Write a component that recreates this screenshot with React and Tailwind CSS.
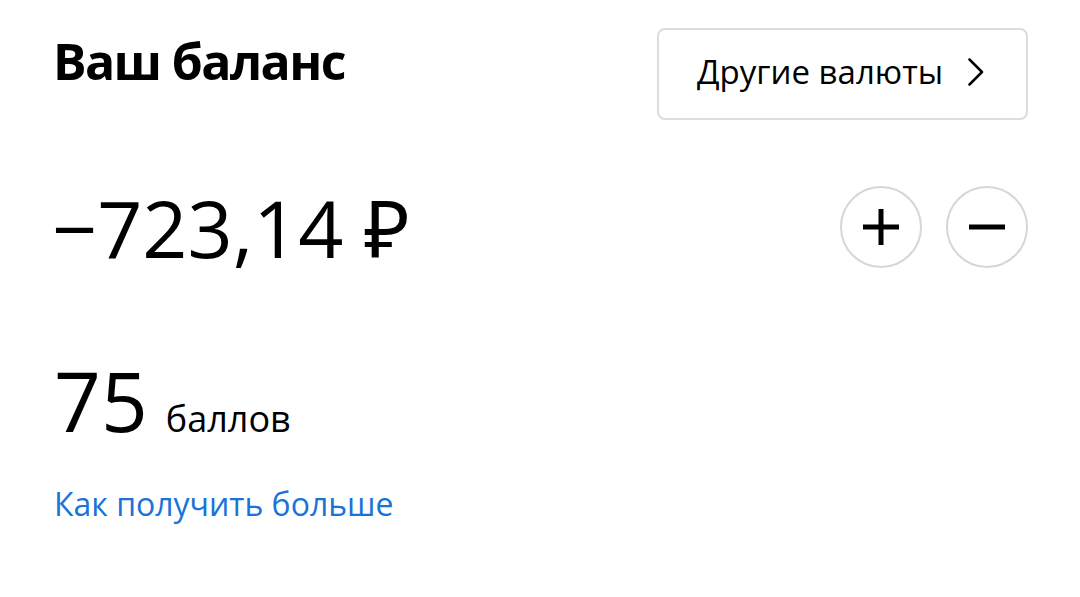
export default function App() {
  const font = { fontFamily: '"Open Sans", "Noto Sans", sans-serif' };
  return (
    <div className="w-[1080px] h-[597px] bg-white text-black pl-[54px] pr-[52px] pt-[28px]" style={font}>
      <div className="flex items-start justify-between">
        <h1 className="text-[50px] font-bold leading-none mt-[8px] -ml-[1px] tracking-[-1.6px]">Ваш баланс</h1>
        <button className="w-[371px] h-[92px] rounded-[8px] border-2 border-[#dcdcdc] flex items-center pl-[38px] pr-[42px] justify-between">
          <span className="text-[33px] leading-none -mt-[6px]">Другие валюты</span>
          <svg width="16" height="28" viewBox="0 0 16 28" fill="none" className="-mt-[4px]">
            <path d="M1.5 1.5 L14 14 L1.5 26.5" stroke="black" strokeWidth="2.5" strokeLinecap="round" strokeLinejoin="round" />
          </svg>
        </button>
      </div>
      <div className="flex items-center justify-between mt-[66px]">
        <div className="text-[79px] leading-none -ml-[2px]">−723,14 ₽</div>
        <div className="flex gap-[24px]">
          <button className="w-[82px] h-[82px] rounded-full border-2 border-[#d6d6d6] flex items-center justify-center">
            <svg width="40" height="40" viewBox="0 0 40 40">
              <path d="M2 20 H38 M20 2 V38" stroke="black" strokeWidth="5" />
            </svg>
          </button>
          <button className="w-[82px] h-[82px] rounded-full border-2 border-[#d6d6d6] flex items-center justify-center">
            <svg width="40" height="40" viewBox="0 0 40 40">
              <path d="M2 20 H38" stroke="black" strokeWidth="5" />
            </svg>
          </button>
        </div>
      </div>
      <div className="flex items-baseline mt-[91px]">
        <span className="text-[82px] leading-none">75</span>
        <span className="text-[36px] leading-none ml-[18px]">баллов</span>
      </div>
      <div className="text-[32px] text-[#1a73d9] mt-[47px] leading-none">Как получить больше</div>
    </div>
  );
}
